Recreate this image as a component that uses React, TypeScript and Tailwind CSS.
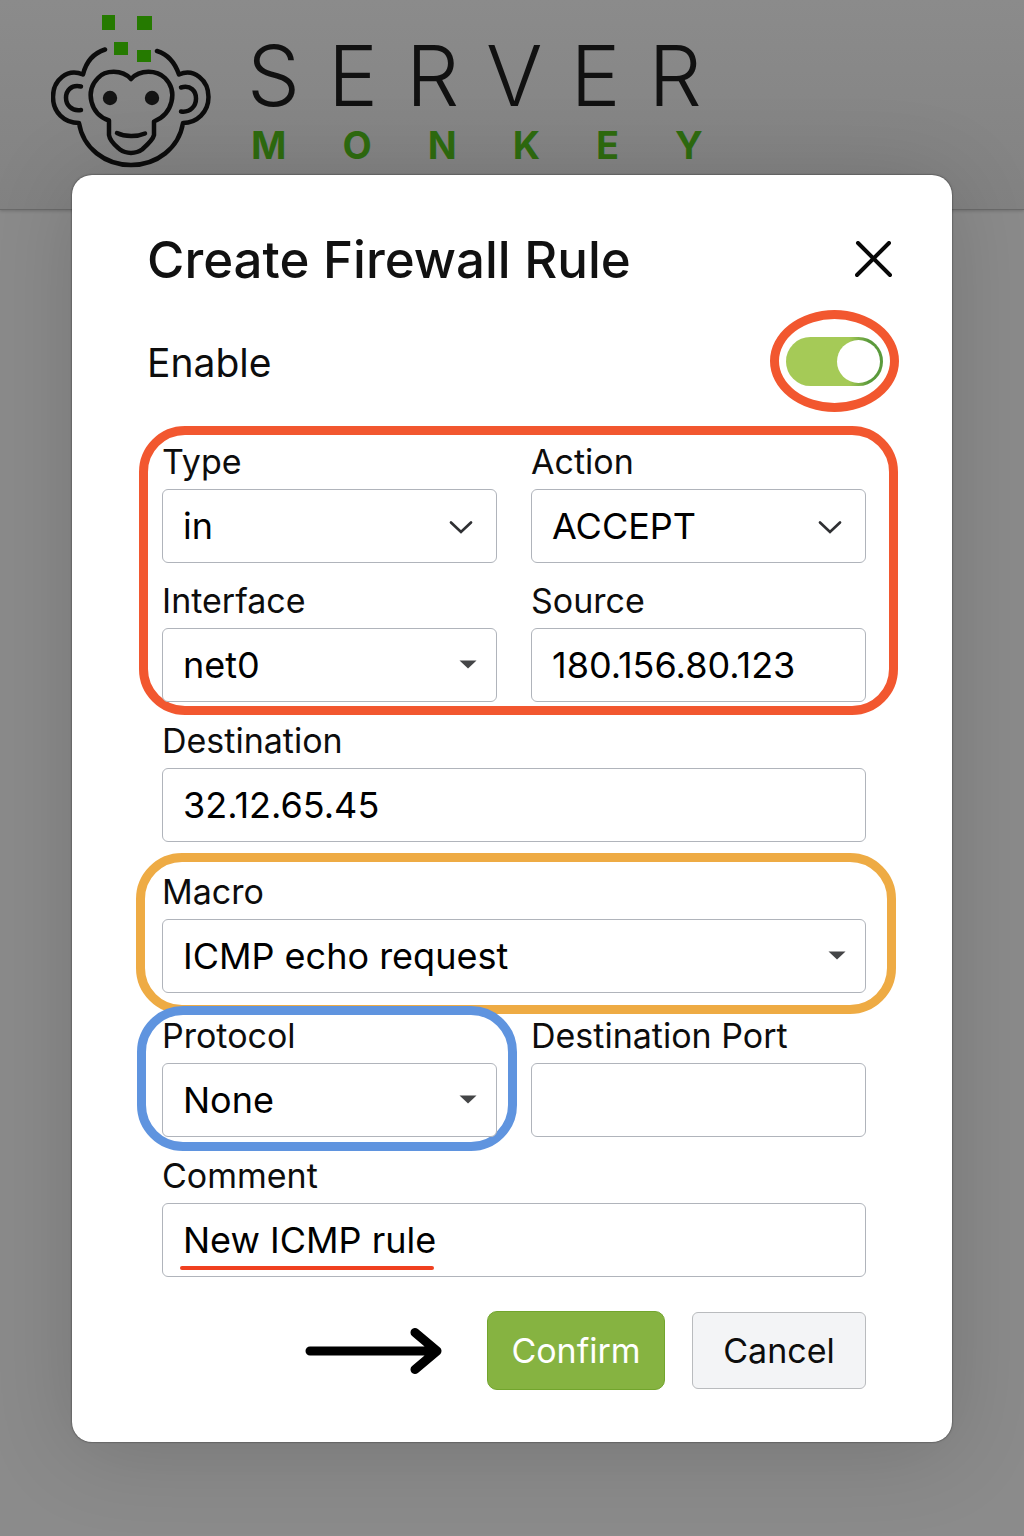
import React, { useState } from 'react';
import { clsx } from 'clsx';

type Caret = 'chevron' | 'triangle';

interface FieldProps {
    id: string;
    label: string;
    children: React.ReactNode;
}

const controlClass =
    'block h-[74px] w-full rounded-md border border-[#b0b4bb] bg-white px-5 text-[36px] text-black outline-none focus:border-[#86b341]';

const Field: React.FC<FieldProps> = ({ id, label, children }) => (
    <div className="min-w-0">
        <label htmlFor={id} className="mb-[7px] block text-[34px] leading-10 whitespace-nowrap text-[#0d0d0d]">
            {label}
        </label>
        <div className="relative">{children}</div>
    </div>
);

interface SelectFieldProps {
    id: string;
    label: string;
    options: string[];
    caret?: Caret;
}

const SelectField: React.FC<SelectFieldProps> = ({ id, label, options, caret = 'triangle' }) => {
    const [value, setValue] = useState(options[0]);

    return (
        <Field id={id} label={label}>
            <select
                id={id}
                value={value}
                onChange={(e) => setValue(e.target.value)}
                className={clsx(controlClass, 'appearance-none')}
            >
                {options.map((o) => (
                    <option key={o}>{o}</option>
                ))}
            </select>
            {caret === 'chevron' ? (
                <svg
                    viewBox="0 0 24 14"
                    className="pointer-events-none absolute top-[31px] right-6 h-[14px] w-6"
                    fill="none"
                    stroke="#2f3033"
                    strokeWidth="2.7"
                    strokeLinecap="round"
                >
                    <path d="M2 2.500l10 9.500L22 2.500" />
                </svg>
            ) : (
                <svg viewBox="0 0 18 9" className="pointer-events-none absolute top-8 right-5 h-[9px] w-[18px]">
                    <path d="M.5 .5h17L9 8.500z" fill="#444547" />
                </svg>
            )}
        </Field>
    );
};

interface TextFieldProps {
    id: string;
    label: string;
    initial?: string;
    underlined?: boolean;
}

const TextField: React.FC<TextFieldProps> = ({ id, label, initial = '', underlined }) => {
    const [value, setValue] = useState(initial);

    return (
        <Field id={id} label={label}>
            <input
                id={id}
                type="text"
                value={value}
                onChange={(e) => setValue(e.target.value)}
                className={controlClass}
            />
            {underlined && (
                <span className="pointer-events-none absolute bottom-[7px] left-[18px] h-1 w-[254px] rounded-full bg-[#f0401f]" />
            )}
        </Field>
    );
};

const MonkeyLogo = () => (
    <svg viewBox="0 0 160 156" className="h-[156px] w-40 shrink-0" fill="none" aria-hidden="true">
        <g fill="#257a00">
            <path d="M51 3h13v15H51zM86 4h15v14H86zM63 30h14v13H63zM86 38h14v12H86z" />
        </g>
        <g stroke="#0c0c0c" strokeWidth="4.500" strokeLinecap="round" strokeLinejoin="round">
            <path d="M54 37.500C43 41 35 50 32 62.500C16 56 2 68 2 85C2 100 13 111 28 111C32 136 54 153 80 153C106 153 128 136 132 111C146 111 157.500 100 157.500 85C157.500 68 143 56 128 62.500C124 51 116 42 106 39" />
            <path d="M80 67C71 57 54 58 47 66C34 79 39 102 58 108.500V123C59 130 65 134 69 137.500C75 142 85 142 91 137.500C95 134 102 128 103 123V109.500C122 102 127 79 114 66C106 58 89 57 80 67z" />
            <path d="M30 74.500C10 70 10 101 30 98M130 75.500C150 70 150 102 130 99.500" />
            <path d="M66 121C74 125 86 125 94 121.500" />
        </g>
        <circle cx="59" cy="86" r="7.200" fill="#141414" />
        <circle cx="101" cy="86" r="7.200" fill="#141414" />
    </svg>
);

const Header = () => (
    <header className="flex h-[210px] items-start border-b border-[#6a6a6a] bg-linear-to-b from-[#8b8b8b] to-[#828282] pt-3 pl-[51px] shadow-[0_1px_3px_rgba(0,0,0,0.2)]">
        <MonkeyLogo />
        <div className="ml-9 pt-[18px] whitespace-nowrap">
            <p className="text-[84px] leading-[92px] font-light tracking-[28px] text-[#111111]">SERVER</p>
            <p className="pl-1 text-[38px] leading-[46px] font-bold tracking-[56px] text-[#2e6b0f]">MONKEY</p>
        </div>
    </header>
);

export default function App() {
    const [enabled, setEnabled] = useState(true);

    return (
        <div className="grid min-h-screen grid-cols-1 bg-[#8b8b8b] font-['Inter','Liberation_Sans',sans-serif]">
            <div className="col-start-1 row-start-1">
                <Header />
            </div>

            {/* Dialog shares the grid cell with the page behind it */}
            <div className="col-start-1 row-start-1 px-[72px] pt-[175px] pb-[94px]">
                <form
                    role="dialog"
                    aria-labelledby="dialog-title"
                    onSubmit={(e) => e.preventDefault()}
                    className="relative rounded-[20px] bg-white pt-[55px] pr-[86px] pb-[52px] pl-[90px] shadow-[0_8px_90px_rgba(0,0,0,0.16),0_0_2px_rgba(0,0,0,0.7)]"
                >
                    <div className="-mr-[27px] -ml-[15px] flex h-[60px] items-center justify-between">
                        <h1 id="dialog-title" className="text-[51px] leading-[60px] font-medium text-[#111111]">
                            Create Firewall Rule
                        </h1>
                        <button type="button" aria-label="Close">
                            <svg viewBox="0 0 38 38" className="h-[38px] w-[38px]" stroke="#080808" strokeWidth="4" strokeLinecap="round">
                                <path d="M3 2l32 32M34 2L2 34" />
                            </svg>
                        </button>
                    </div>

                    <div className="mt-5 -mr-[33px] -ml-[15px] flex items-center justify-between">
                        <label htmlFor="enable" className="pt-1 text-[39px] leading-[48px] text-[#0d0d0d]">
                            Enable
                        </label>
                        <div className="flex h-[102px] w-[129px] items-center justify-center rounded-[50%] border-[9px] border-[#f2572f]">
                            <input
                                id="enable"
                                type="checkbox"
                                role="switch"
                                checked={enabled}
                                onChange={(e) => setEnabled(e.target.checked)}
                                className="flex h-[49px] w-[97px] shrink-0 appearance-none items-center rounded-full bg-[#bdbdbd] px-[3px] before:block before:h-[43px] before:w-[43px] before:rounded-full before:bg-white before:content-[''] checked:justify-end checked:bg-linear-to-r checked:from-[#a5ca57] checked:from-65% checked:to-[#5b9a3c] checked:to-85%"
                            />
                        </div>
                    </div>

                    <section className="mt-[14px] -mr-8 -ml-[23px] grid grid-cols-2 gap-x-[34px] gap-y-[18px] rounded-[46px] border-[9px] border-[#f2572f] pt-[7px] pr-[23px] pb-1 pl-[14px]">
                        <SelectField id="type" label="Type" options={['in', 'out']} caret="chevron" />
                        <SelectField id="action" label="Action" options={['ACCEPT', 'DROP', 'REJECT']} caret="chevron" />
                        <SelectField id="interface" label="Interface" options={['net0', 'net1']} />
                        <TextField id="source" label="Source" initial="180.156.80.123" />
                    </section>

                    <div className="mt-[6px]">
                        <TextField id="destination" label="Destination" initial="32.12.65.45" />
                    </div>

                    <section className="mt-[11px] -mr-[30px] -ml-[26px] rounded-[46px] border-[9px] border-[#eeab44] pt-[10px] pr-[21px] pb-3 pl-[17px]">
                        <SelectField
                            id="macro"
                            label="Macro"
                            options={['ICMP echo request', 'HTTP', 'HTTPS', 'SSH']}
                        />
                    </section>

                    <div className="mt-[2px] grid grid-cols-2 gap-x-[34px]">
                        <section className="relative -mt-[10px] -mr-5 -mb-[14px] -ml-[25px] rounded-[46px] border-[9px] border-[#5f94df] pt-px pr-[11px] pb-[5px] pl-4">
                            <SelectField id="protocol" label="Protocol" options={['None', 'tcp', 'udp', 'icmp']} />
                        </section>
                        <TextField id="destination-port" label="Destination Port" />
                    </div>

                    <div className="mt-[19px]">
                        <TextField id="comment" label="Comment" initial="New ICMP rule" underlined />
                    </div>

                    <div className="mt-[34px] flex items-center justify-end">
                        <svg viewBox="0 0 138 48" className="mr-11 h-12 w-[138px]" fill="none" stroke="#000" strokeWidth="9" strokeLinecap="round" strokeLinejoin="round">
                            <path d="M5 24h127M110 5.500L132 24L110 42.500" />
                        </svg>
                        <button
                            type="submit"
                            className="h-[79px] w-[178px] rounded-[10px] border border-[#72a52d] bg-[#86b341] text-[34px] text-white"
                        >
                            Confirm
                        </button>
                        <button
                            type="button"
                            className="ml-[27px] h-[77px] w-[174px] rounded-md border border-[#b9bbbe] bg-[#f3f4f6] text-[34px] text-[#0d0d0d]"
                        >
                            Cancel
                        </button>
                    </div>
                </form>
            </div>
        </div>
    );
}
